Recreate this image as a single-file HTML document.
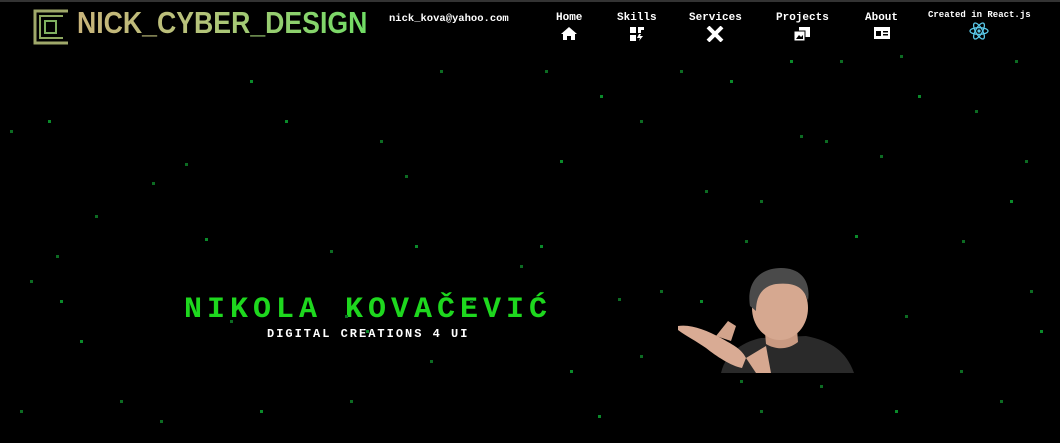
<!DOCTYPE html>
<html><head><meta charset="utf-8"><style>
html,body{margin:0;padding:0;background:#000;width:1060px;height:443px;overflow:hidden;position:relative;font-family:"Liberation Mono",monospace}
.top{position:absolute;left:0;top:0;width:1060px;height:2px;background:#333}
.s{position:absolute;width:3px;height:3px;background:#0c6b22}
.logo{position:absolute;left:77px;top:5px;font-family:"Liberation Sans",sans-serif;font-weight:bold;font-size:31px;letter-spacing:0px;background:linear-gradient(90deg,#c8b47a,#b7c27a 40%,#6fdc64);-webkit-background-clip:text;color:transparent;transform:scaleX(0.86);transform-origin:left}
.nav{position:absolute;top:12px;color:#fff;font-size:11px;font-weight:bold;text-align:center}
.nav svg{display:block;margin:2px auto 0}
.name{position:absolute;left:184px;top:293px;color:#1ed81e;font-size:30px;font-weight:bold;letter-spacing:5px}
.sub{position:absolute;left:267px;top:327px;color:#fff;font-size:12px;font-weight:bold;letter-spacing:2px}
</style></head><body>
<div class="top"></div>
<svg style="position:absolute;left:33px;top:9px" width="36" height="36" viewBox="0 0 36 36"><path d="M35 2H2V34H35" fill="none" stroke="#9fa86a" stroke-width="3"/><path d="M30 7H7V29H30" fill="none" stroke="#8da860" stroke-width="2"/><rect x="12" y="12" width="11" height="12" fill="none" stroke="#7fb060" stroke-width="2"/></svg>
<div class="logo">NICK_CYBER_DESIGN</div>
<div style="position:absolute;left:389px;top:13px;color:#fff;font-size:10.5px;font-weight:bold">nick_kova@yahoo.com</div>
<div class="nav" style="left:556px">Home<svg width="18" height="14" viewBox="0 0 18 14"><path d="M9 1L1 8h2v6h4v-4h4v4h4V8h2z" fill="#fff"/></svg></div>
<div class="nav" style="left:617px">Skills<svg width="16" height="15" viewBox="0 0 16 15"><path d="M1 1h6v6H1zM9 1h6v3h-3v3H9zM1 9h6v6H1zM10 8l-2 4h3l-1 3 4-5h-3l1-2z" fill="#fff"/></svg></div>
<div class="nav" style="left:689px">Services<svg width="18" height="16" viewBox="0 0 18 16"><path d="M2 1l14 14M16 1L2 15" stroke="#fff" stroke-width="4"/></svg></div>
<div class="nav" style="left:776px">Projects<svg width="18" height="16" viewBox="0 0 18 16"><rect x="6" y="1" width="11" height="10" fill="#fff"/><rect x="1" y="5" width="11" height="10" fill="#fff" stroke="#000"/><path d="M3 13l3-4 2 2 2-2v4z" fill="#000"/></svg></div>
<div class="nav" style="left:865px">About<svg width="18" height="14" viewBox="0 0 18 14"><rect x="1" y="1" width="16" height="12" fill="#fff"/><rect x="3" y="5" width="5" height="5" fill="#000"/><rect x="10" y="5" width="5" height="1.5" fill="#000"/><rect x="10" y="8" width="5" height="1.5" fill="#000"/></svg></div>
<div class="nav" style="left:928px;top:10px;font-size:9px">Created in React.js<svg width="20" height="18" viewBox="-10 -9 20 18"><g fill="none" stroke="#5ac8e8" stroke-width="1.3"><ellipse rx="9" ry="3.4"/><ellipse rx="9" ry="3.4" transform="rotate(60)"/><ellipse rx="9" ry="3.4" transform="rotate(120)"/></g><circle r="1.6" fill="#5ac8e8"/></svg></div>
<div class="name">NIKOLA KOVAČEVIĆ</div>
<div class="sub">DIGITAL CREATIONS 4 UI</div>
<svg style="position:absolute;left:676px;top:266px" width="180" height="107" viewBox="0 0 180 107">
<path d="M45 107C50 85 70 75 85 72L130 70C155 75 170 85 178 107Z" fill="#2a2a2a"/>
<path d="M88 55L90 78C100 84 112 84 122 76L120 50Z" fill="#c99a82"/>
<ellipse cx="104" cy="42" rx="28" ry="32" fill="#d6a890"/>
<path d="M74 40C70 15 85 2 105 2C125 2 135 15 132 35C128 22 120 16 100 18C88 20 80 28 80 45Z" fill="#4a4a4a"/>
<path d="M2 60C15 58 30 64 45 72C55 78 65 82 70 92L66 102C55 100 40 90 30 82C20 75 10 70 2 64Z" fill="#d9ab94"/>
<path d="M40 70L52 55L60 60L55 75Z" fill="#d2a48c"/>
<path d="M80 107L70 92L90 80L95 107Z" fill="#d6a890"/>
</svg>
<div id="st"></div>
<script>
var p=[[48,120],[152,182],[185,163],[205,238],[56,255],[30,280],[60,300],[95,215],[120,400],[260,410],[330,250],[345,315],[366,330],[350,400],[405,175],[415,245],[520,265],[545,70],[600,95],[640,120],[618,298],[598,415],[640,355],[660,290],[730,80],[745,240],[760,200],[790,60],[800,135],[825,140],[855,235],[880,155],[905,315],[918,95],[962,240],[975,110],[1010,200],[1025,160],[1030,290],[1040,330],[1015,60],[1000,400],[895,410],[820,385],[760,410],[700,300],[470,300],[440,70],[250,80],[160,420],[10,130],[80,340],[230,320],[705,190],[560,160],[680,70],[380,140],[285,120],[960,370],[840,60],[540,245],[900,55],[740,380],[570,370],[430,360],[20,410]];
var h='';p.forEach(function(a,i){h+='<div class="s" style="left:'+a[0]+'px;top:'+a[1]+'px;'+(i%3==0?'background:#0a8a2a':'')+'"></div>'});document.getElementById('st').innerHTML=h;
</script>
</body></html>
